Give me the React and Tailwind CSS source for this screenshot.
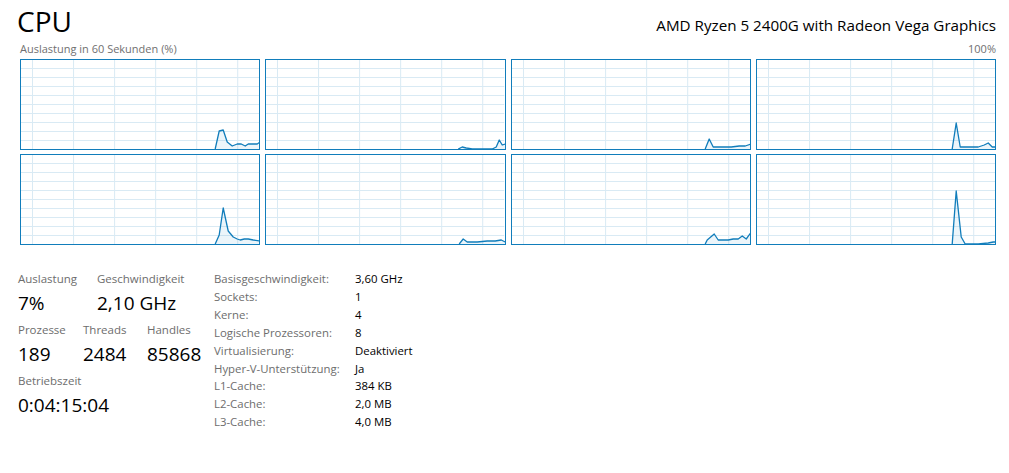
const LINE = '#117dbb'

// Verlauf pro logischem Prozessor, Koordinaten im Innenbereich (238 x 89)
const CORES = [
  [[194,89],[198,71],[202,70],[206,82],[211,86],[216,84],[220,84],[224,86],[227,84],[236,84],[239,82]],
  [[192,89],[196,87],[200,88],[206,89],[226,89],[230,87],[233,80],[236,85],[239,84]],
  [[193,89],[197,79],[201,87],[209,87],[219,87],[227,86],[233,86],[239,84]],
  [[195,89],[199,63],[203,87],[209,87],[221,87],[227,85],[231,83],[235,87],[239,87]],
  [[194,89],[198,80],[202,53],[207,76],[212,82],[216,84],[219,85],[223,84],[227,84],[232,85],[239,86]],
  [[193,89],[197,84],[201,87],[211,87],[221,86],[229,86],[235,85],[239,87]],
  [[193,89],[195,85],[202,79],[206,85],[216,85],[221,84],[226,84],[230,81],[234,84],[239,77]],
  [[195,89],[199,36],[204,82],[208,89],[211,89],[221,89],[231,88],[236,87],[239,87]],
]

const V_GRID = [11, 52, 93, 134, 175, 216]
const H_GRID = [8, 17, 26, 35, 44, 53, 62, 71, 80]

const DETAILS = [
  ['Basisgeschwindigkeit:', '3,60 GHz'],
  ['Sockets:', '1'],
  ['Kerne:', '4'],
  ['Logische Prozessoren:', '8'],
  ['Virtualisierung:', 'Deaktiviert'],
  ['Hyper-V-Unterstützung:', 'Ja'],
  ['L1-Cache:', '384 KB'],
  ['L2-Cache:', '2,0 MB'],
  ['L3-Cache:', '4,0 MB'],
]

function CoreGraph({ points }) {
  const line = points.map(p => p.join(',')).join(' ')
  const area = `${line} ${points[points.length - 1][0]},89 ${points[0][0]},89`
  return (
    <div className="h-[91px] border border-[#117dbb] bg-white">
      <svg viewBox="0 0 238 89" preserveAspectRatio="none" className="block w-full h-full">
        {V_GRID.map(x => (
          <line key={'v' + x} x1={x + 0.5} y1="0" x2={x + 0.5} y2="89" stroke="#d9eaf4" strokeWidth="1" />
        ))}
        {H_GRID.map(y => (
          <line key={'h' + y} x1="0" y1={y + 0.5} x2="238" y2={y + 0.5} stroke="#d9eaf4" strokeWidth="1" />
        ))}
        <polygon points={area} fill={LINE} fillOpacity="0.08" />
        <polyline points={line} fill="none" stroke={LINE} strokeWidth="1.3" strokeLinejoin="round" />
      </svg>
    </div>
  )
}

function Stat({ label, value, className = '' }) {
  return (
    <div className={className}>
      <div className="text-[11.5px] leading-[18px] text-[#6d6d6d]">{label}</div>
      <div className="text-[19px] leading-[30px] text-black">{value}</div>
    </div>
  )
}

export default function App() {
  return (
    <div className="w-[1009px] h-[473px] overflow-hidden bg-white pl-[20px] pr-[13px] font-['Open_Sans',sans-serif]">
      {/* Kopfzeile */}
      <div className="flex items-end justify-between h-[40px]">
        <span className="text-[28px] leading-[38px] ml-[-3px] text-black">CPU</span>
        <span className="text-[15.2px] leading-[22px] mb-[4px] text-black">AMD Ryzen 5 2400G with Radeon Vega Graphics</span>
      </div>

      <div className="flex justify-between text-[11px] leading-[16px] text-[#707070] mt-[1px]">
        <span>Auslastung in 60 Sekunden (%)</span>
        <span>100%</span>
      </div>

      {/* Diagramme je logischem Prozessor */}
      <div className="grid grid-cols-4 gap-x-[5px] gap-y-[4px] mt-[2px]">
        {CORES.map((pts, i) => <CoreGraph key={i} points={pts} />)}
      </div>

      {/* Kennzahlen */}
      <div className="flex mt-[26px]">
        <div className="w-[194px] ml-[-2px] mt-[-1px]">
          <div className="flex">
            <Stat label="Auslastung" value="7%" className="w-[79px]" />
            <Stat label="Geschwindigkeit" value="2,10 GHz" />
          </div>
          <div className="flex mt-[3px]">
            <Stat label="Prozesse" value="189" className="w-[65px]" />
            <Stat label="Threads" value="2484" className="w-[64px]" />
            <Stat label="Handles" value="85868" />
          </div>
          <Stat label="Betriebszeit" value="0:04:15:04" className="mt-[3px]" />
        </div>

        <div className="ml-[2px] mt-[-1px] text-[11.4px] leading-[17.9px]">
          {DETAILS.map(([k, v]) => (
            <div key={k} className="flex">
              <span className="w-[141px] text-[#6d6d6d]">{k}</span>
              <span className="text-black">{v}</span>
            </div>
          ))}
        </div>
      </div>
    </div>
  )
}
